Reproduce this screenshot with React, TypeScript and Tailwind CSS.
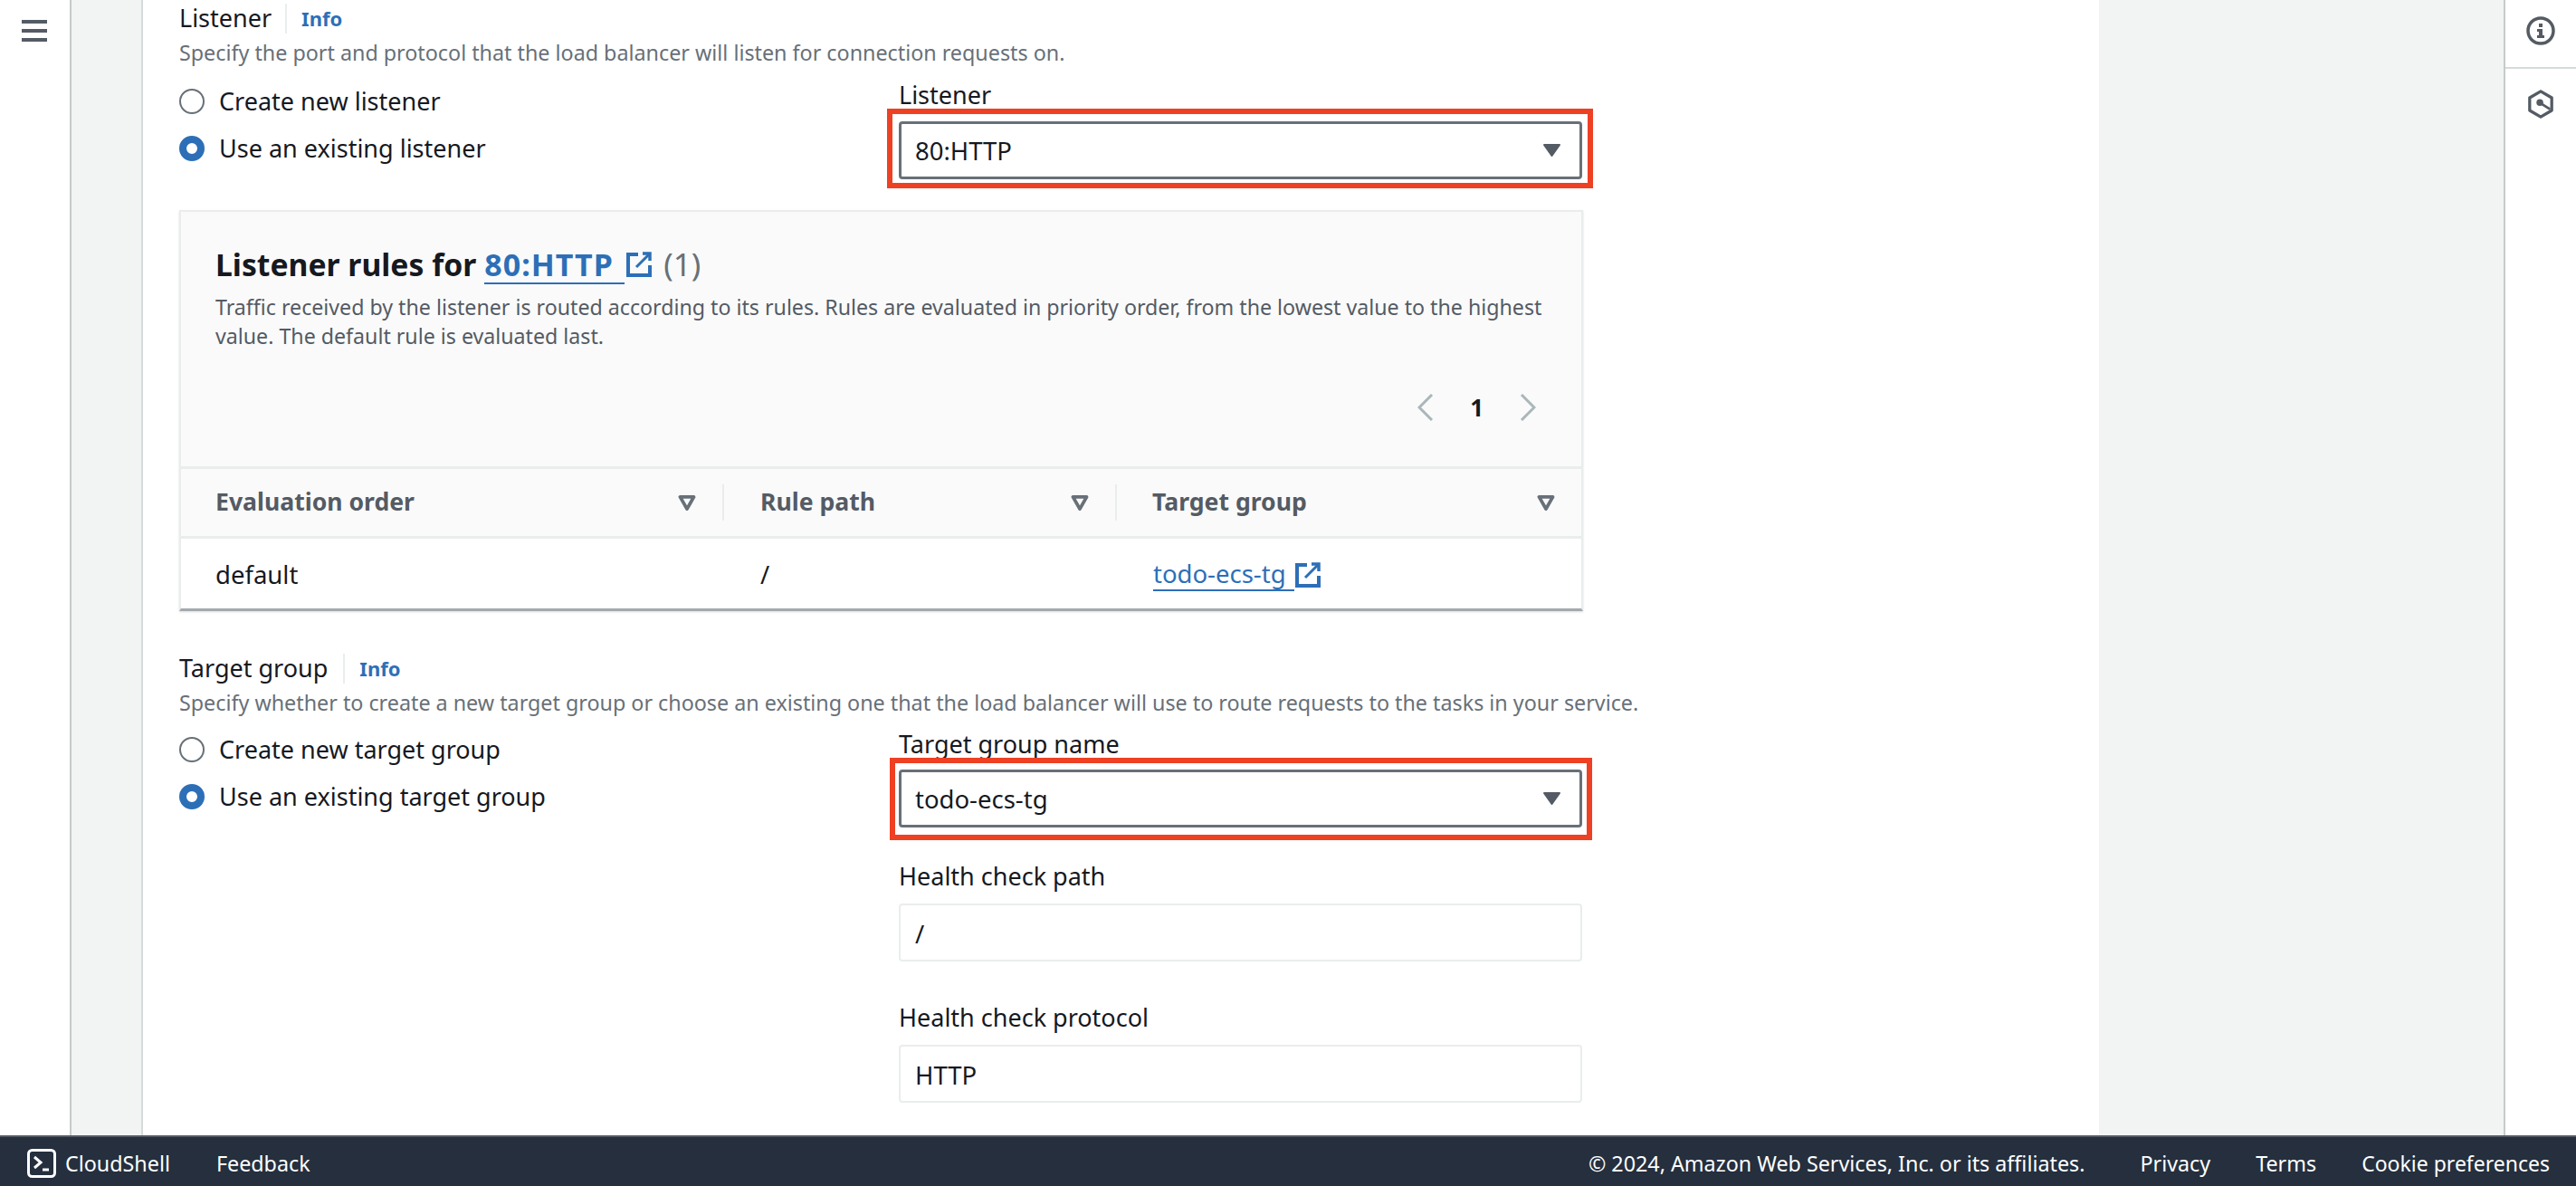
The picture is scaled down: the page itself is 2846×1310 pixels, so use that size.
import type { ReactNode } from "react";

function ExternalIcon({ className }: { className: string }) {
  return (
    <svg viewBox="0 0 28 28" className={className} fill="none" stroke="#2d6fb7" strokeWidth="4">
      <path d="M13 3H2v23h24V15" />
      <path d="M18 2h8v8" strokeWidth="3.5" />
      <path d="M25 3 11 17" strokeWidth="3" />
    </svg>
  );
}

function SortIcon() {
  return (
    <svg viewBox="0 0 20 18" className="w-[20px] h-[17px] shrink-0" fill="none" stroke="#687078" strokeWidth="4" strokeLinejoin="round">
      <path d="M2 2h16l-8 14z" />
    </svg>
  );
}

function Radio({ checked, label }: { checked?: boolean; label: string }) {
  return (
    <div className="h-[52px] flex items-center">
      {checked ? (
        <span className="w-[28px] h-[28px] rounded-full border-[8px] border-[#2d6fb7] bg-white" />
      ) : (
        <span className="w-[28px] h-[28px] rounded-full border-[2px] border-[#687078] bg-white" />
      )}
      <span className="ml-[16px] text-[27px] leading-[32px] text-[#16191f]">{label}</span>
    </div>
  );
}

function SectionHead({ title, description, divider }: { title: string; description: string; divider: string }) {
  return (
    <>
      <div className="h-[40px] flex items-center">
        <span className="text-[27px] text-[#16191f]">{title}</span>
        <span className={`${divider} w-[2px] h-[33px] bg-[#eaeded]`} />
        <span className="ml-[16px] text-[22px] font-bold text-[#2d6fb7]">Info</span>
      </div>
      <p className="text-[23.3px] leading-[32px] text-[#687078] mt-[2px]">{description}</p>
    </>
  );
}

function Label({ children }: { children: ReactNode }) {
  return <div className="h-[32px] leading-[32px] text-[27px] text-[#16191f]">{children}</div>;
}

function Select({ value, frame }: { value: string; frame: string }) {
  return (
    <div className="relative h-[64px]">
      <div className="h-full flex items-center justify-between pl-[15px] pr-[20px] border-[3px] border-[#687078] rounded-[4px] bg-white">
        <span className="pt-[2px] text-[27.5px] text-[#16191f]">{value}</span>
        <svg viewBox="0 0 21 16" className="w-[21px] h-[16px]" fill="#545b64" stroke="#545b64" strokeWidth="2" strokeLinejoin="round">
          <path d="M2 2h17l-8.500 12z" />
        </svg>
      </div>
      <div className={`${frame} absolute border-[6px] border-[#ee4023] pointer-events-none`} />
    </div>
  );
}

function Input({ value }: { value: string }) {
  return (
    <div className="h-[64px] flex items-center pl-[16px] pt-[3px] border-[2px] border-[#eaeded] rounded-[4px] text-[27.5px] text-[#16191f]">
      {value}
    </div>
  );
}

function HeadCell({ title, width, last }: { title: string; width: string; last?: boolean }) {
  return (
    <div className={`${width} flex items-center`}>
      <span className="flex-1 text-[26.6px] font-bold text-[#545b64]">{title}</span>
      <SortIcon />
      {last ? <span className="w-[30px]" /> : <span className="ml-[29px] w-[2px] h-[40px] bg-[#eaeded]" />}
    </div>
  );
}

export default function App() {
  return (
    <div className="w-[2846px] h-[1310px] flex flex-col overflow-hidden bg-white font-['Noto_Sans',sans-serif]">
      <div className="flex flex-1 min-h-0">
        {/* left nav */}
        <div className="w-[79px] shrink-0 border-r-[2px] border-[#c6caca] pt-[22px] pl-[24px]">
          <div className="w-[28px] flex flex-col gap-[6px]">
            <span className="h-[4px] bg-[#545b64]" />
            <span className="h-[4px] bg-[#545b64]" />
            <span className="h-[4px] bg-[#545b64]" />
          </div>
        </div>
        <div className="w-[79px] shrink-0 bg-[#f2f3f3] border-r-[2px] border-[#d5dbdb]" />

        {/* main panel */}
        <div className="w-[2161px] shrink-0 pl-[40px]">
          <SectionHead
            title="Listener"
            divider="ml-[15px]"
            description="Specify the port and protocol that the load balancer will listen for connection requests on."
          />
          <div className="flex mt-[12px]">
            <div className="w-[795px]">
              <Radio label="Create new listener" />
              <Radio checked label="Use an existing listener" />
            </div>
            <div className="w-[755px] pt-[3px]">
              <Label>Listener</Label>
              <div className="mt-[13px]">
                <Select value="80:HTTP" frame="-top-[14px] -bottom-[10px] -left-[13px] -right-[12px]" />
              </div>
            </div>
          </div>

          <div className="w-[1551px] mt-[34px] border-x-[2px] border-t-[2px] border-[#eaeded] border-b-[3px] border-b-[#a3a9ad] shadow-[0_1px_2px_rgba(0,0,0,0.15)]">
            <div className="h-[281px] bg-[#fafafa] pt-[36px] pl-[38px] pr-[40px]">
              <div className="flex items-center h-[44px]">
                <span className="text-[33.7px] font-bold text-[#16191f]">Listener rules for</span>
                <span className="ml-[9px] h-[44px] leading-[44px] w-[155px] text-[34px] tracking-[1px] font-bold text-[#2d6fb7] border-b-[2px] border-[#2d6fb7]">
                  80:HTTP
                </span>
                <ExternalIcon className="ml-[2px] w-[28px] h-[28px]" />
                <span className="ml-[13px] text-[35px] text-[#687078]">(1)</span>
              </div>
              <p className="mt-[9px] -mr-[10px] text-[23.2px] leading-[32px] text-[#545b64]">
                Traffic received by the listener is routed according to its rules. Rules are evaluated in priority order, from the lowest value to the highest value. The default rule is evaluated last.
              </p>
              <div className="mt-[43px] h-[40px] flex items-center justify-end pr-[10px]">
                <svg viewBox="0 0 18 30" className="w-[18px] h-[30px]" fill="none" stroke="#aab7b8" strokeWidth="3"><path d="M16 1 2 15l14 14" /></svg>
                <span className="mx-[40px] text-[26px] font-bold text-[#16191f]">1</span>
                <svg viewBox="0 0 18 30" className="w-[18px] h-[30px]" fill="none" stroke="#aab7b8" strokeWidth="3"><path d="M2 1l14 14L2 29" /></svg>
              </div>
            </div>
            <div className="h-[80px] flex bg-[#fafafa] border-y-[3px] border-[#eaeded]">
              <div className="pl-[38px] flex">
                <HeadCell title="Evaluation order" width="w-[562px]" />
              </div>
              <div className="pl-[40px] flex">
                <HeadCell title="Rule path" width="w-[394px]" />
              </div>
              <div className="pl-[39px] flex">
                <HeadCell title="Target group" width="w-[475px]" last />
              </div>
            </div>
            <div className="h-[77px] flex items-center pt-[2px] text-[27.5px] text-[#16191f]">
              <span className="pl-[38px] w-[600px]">default</span>
              <span className="pl-[40px] w-[435px]">/</span>
              <span className="pl-[39px] flex items-center">
                <span className="w-[156px] h-[37px] leading-[35px] text-[#2d6fb7] border-b-[2px] border-[#2d6fb7]">todo-ecs-tg</span>
                <ExternalIcon className="ml-[1px] w-[28px] h-[28px]" />
              </span>
            </div>
          </div>

          <div className="mt-[43px]">
            <SectionHead
              title="Target group"
              divider="ml-[17px]"
              description="Specify whether to create a new target group or choose an existing one that the load balancer will use to route requests to the tasks in your service."
            />
          </div>
          <div className="flex mt-[10px]">
            <div className="w-[795px]">
              <Radio label="Create new target group" />
              <Radio checked label="Use an existing target group" />
            </div>
            <div className="w-[755px] pt-[4px]">
              <Label>Target group name</Label>
              <div className="mt-[12px]">
                <Select value="todo-ecs-tg" frame="-top-[13px] -bottom-[14px] -left-[10px] -right-[11px]" />
              </div>
              <div className="mt-[38px]">
                <Label>Health check path</Label>
              </div>
              <div className="mt-[14px]">
                <Input value="/" />
              </div>
              <div className="mt-[46px]">
                <Label>Health check protocol</Label>
              </div>
              <div className="mt-[14px]">
                <Input value="HTTP" />
              </div>
            </div>
          </div>
        </div>

        <div className="flex-1 bg-[#f2f3f3] border-r-[2px] border-[#c6caca]" />

        {/* right rail */}
        <div className="w-[78px] shrink-0">
          <div className="h-[76px] border-b-[2px] border-[#d5dbdb] flex justify-center pt-[18px]">
            <svg viewBox="0 0 32 32" className="w-[32px] h-[32px]" fill="none">
              <circle cx="16" cy="16" r="14" stroke="#545b64" strokeWidth="3.500" />
              <rect x="14" y="8" width="4" height="4" fill="#545b64" />
              <path d="M12 14h6v7h2v3h-8v-3h2v-4h-2z" fill="#545b64" />
            </svg>
          </div>
          <div className="flex justify-center pt-[23px]">
            <svg viewBox="0 0 32 34" className="w-[30px] h-[32px]" fill="none" stroke="#545b64" strokeWidth="3.500" strokeLinejoin="round">
              <path d="M16 2 29 9.500v15L16 32 3 24.500v-15z" />
              <circle cx="15" cy="15" r="4" fill="#545b64" stroke="none" />
              <path d="m16 16 11 7" strokeWidth="3" />
            </svg>
          </div>
        </div>
      </div>

      {/* footer */}
      <div className="h-[56px] shrink-0 flex items-center bg-[#252f3e] border-t-[2px] border-[#545b64] pl-[30px] pr-[29px] pt-[4px] text-[23.3px] text-white">
        <svg viewBox="0 0 32 32" className="w-[32px] h-[32px]" fill="none" stroke="white" strokeWidth="3">
          <rect x="1.500" y="1.500" width="29" height="29" rx="4" />
          <path d="m8 9 7 6-7 6" />
          <path d="M17 23h7" />
        </svg>
        <span className="ml-[10px]">CloudShell</span>
        <span className="ml-[51px]">Feedback</span>
        <span className="ml-auto">© 2024, Amazon Web Services, Inc. or its affiliates.</span>
        <span className="ml-[61px]">Privacy</span>
        <span className="ml-[50px]">Terms</span>
        <span className="ml-[50px] text-[23px]">Cookie preferences</span>
      </div>
    </div>
  );
}
